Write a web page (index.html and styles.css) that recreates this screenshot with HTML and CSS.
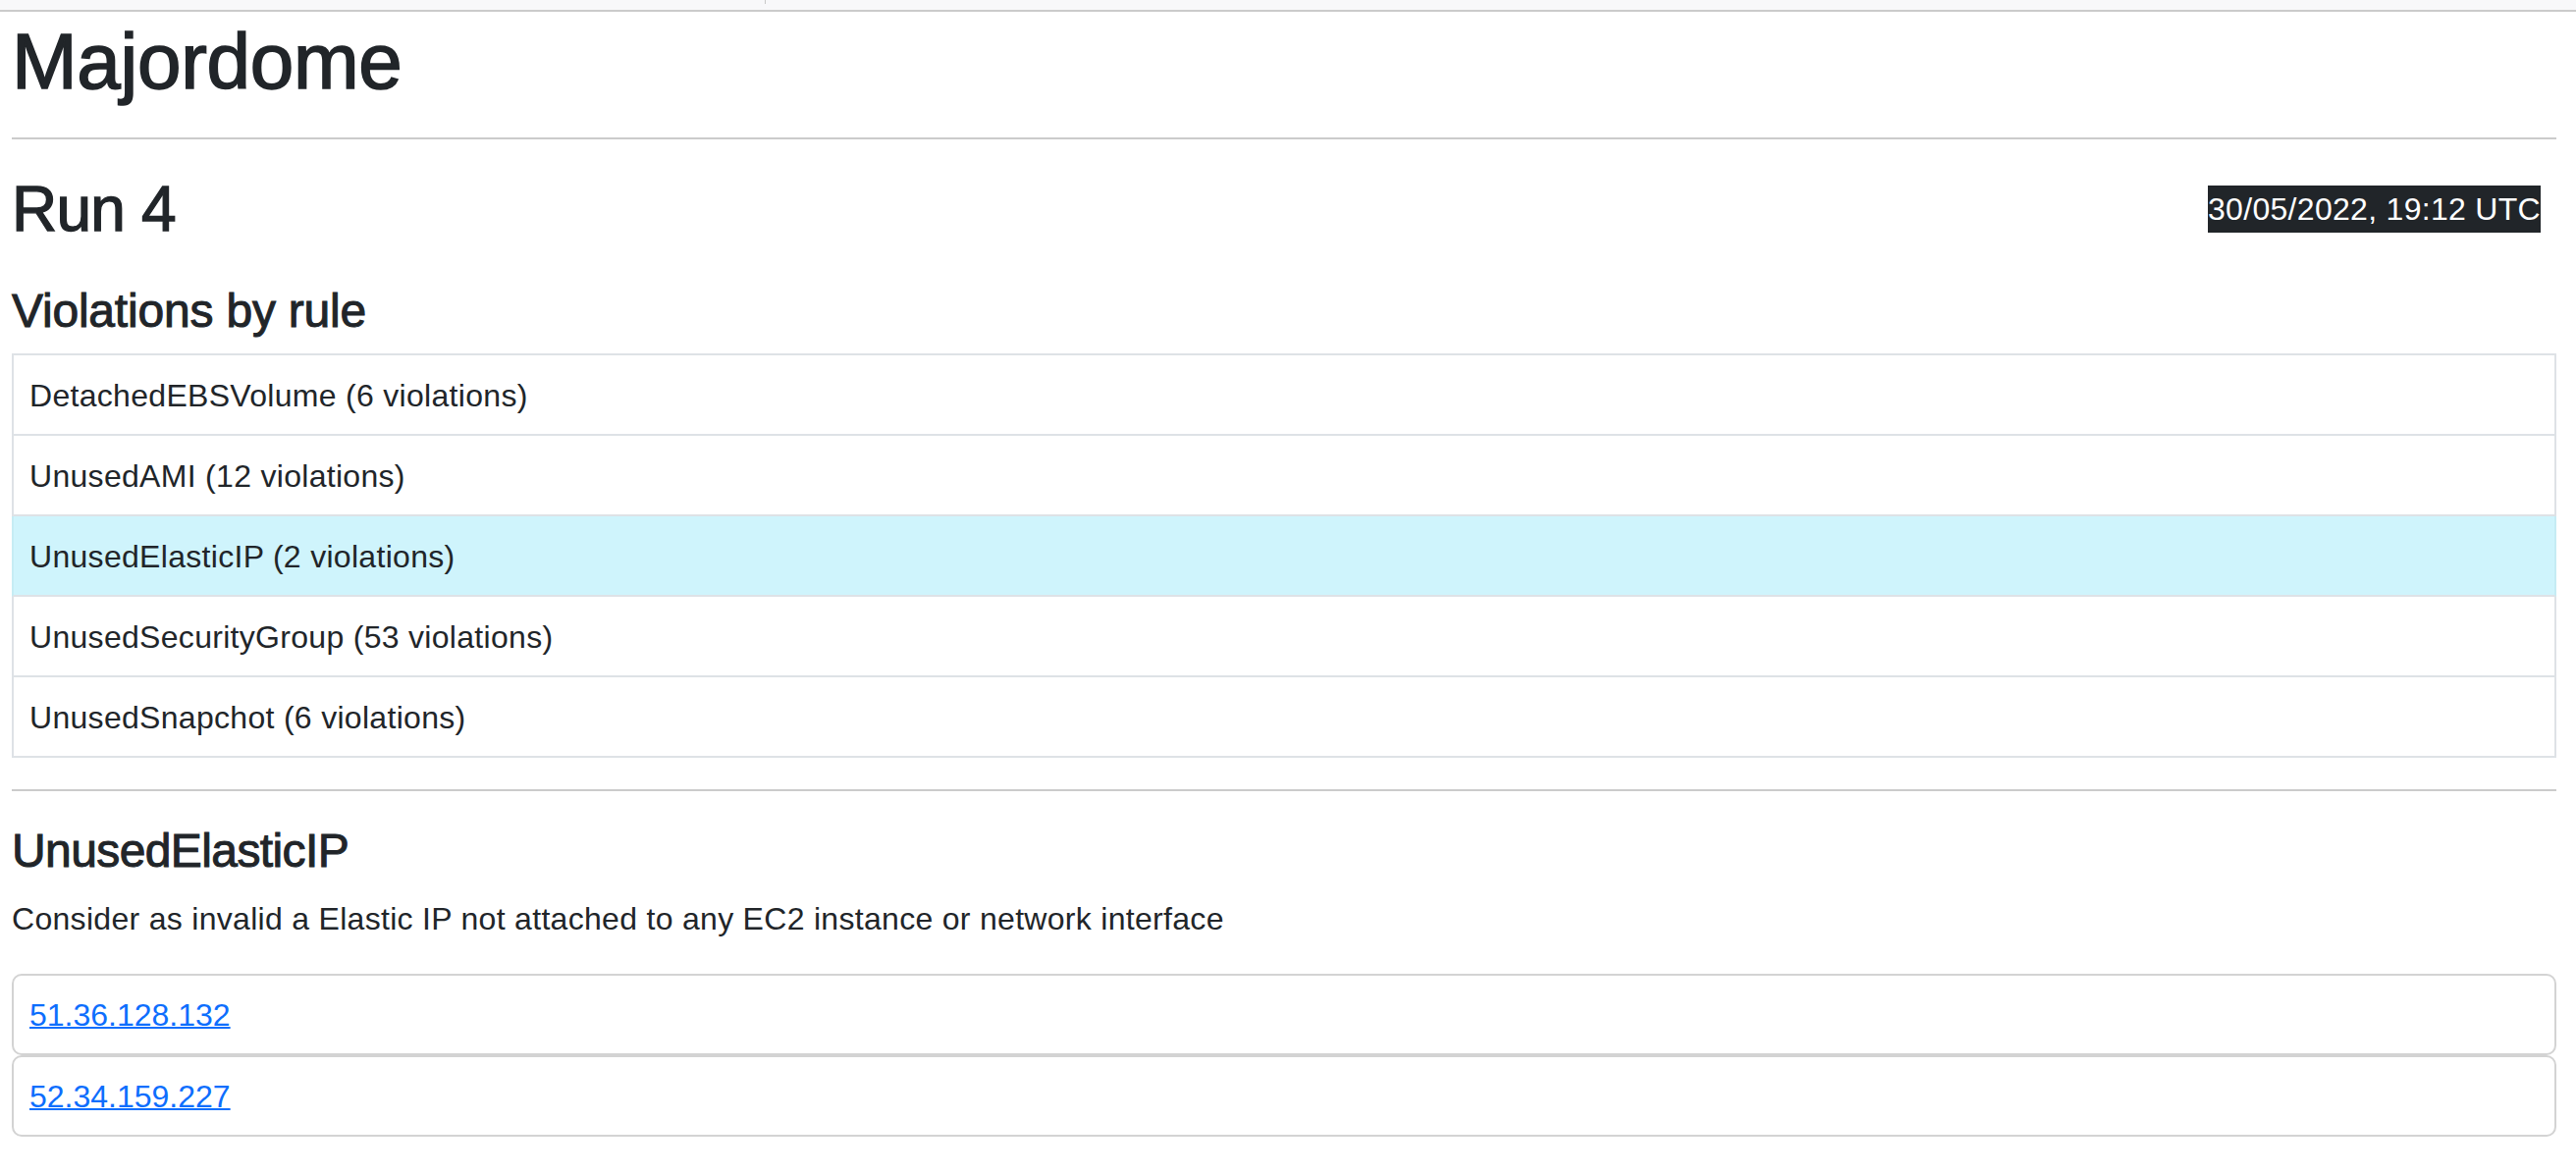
FILE: index.html
```html
<!DOCTYPE html>
<html lang="en">
<head>
<meta charset="utf-8">
<title>Majordome</title>
<link rel="stylesheet" href="styles.css">
</head>
<body>
<div class="topbar"><div class="tab"></div></div>
<div class="container">
  <h1 class="title">Majordome</h1>
  <hr class="rule rule-top">
  <div class="run-header">
    <h2 class="run-title">Run 4</h2>
    <span class="run-date">30/05/2022, 19:12 UTC</span>
  </div>
  <h4 class="section-title">Violations by rule</h4>
  <ul class="rule-list">
    <li class="rule-item">DetachedEBSVolume (6 violations)</li>
    <li class="rule-item">UnusedAMI (12 violations)</li>
    <li class="rule-item rule-item-info">UnusedElasticIP (2 violations)</li>
    <li class="rule-item">UnusedSecurityGroup (53 violations)</li>
    <li class="rule-item">UnusedSnapchot (6 violations)</li>
  </ul>
  <hr class="rule rule-mid">
  <h4 class="detail-title">UnusedElasticIP</h4>
  <p class="detail-desc">Consider as invalid a Elastic IP not attached to any EC2 instance or network interface</p>
  <div class="resource-list">
    <div class="resource-card"><a class="resource-link" href="#">51.36.128.132</a></div>
    <div class="resource-card"><a class="resource-link" href="#">52.34.159.227</a></div>
  </div>
</div>
</body>
</html>
```
FILE: styles.css
```css
html, body {
  margin: 0;
  padding: 0;
  background: #ffffff;
}

body {
  font-family: "Liberation Sans", Arial, Helvetica, sans-serif;
  font-size: 32px;
  line-height: 48px;
  color: #212529;
  letter-spacing: 0.3px;
}

.topbar {
  height: 10px;
  background: #f8f8fa;
  border-bottom: 2px solid #cbcbcb;
}

.tab {
  width: 779px;
  height: 4px;
  border-right: 1px solid #c8c8c8;
}

.container {
  padding: 0 20px 0 12px;
}

.title {
  font-size: 80px;
  line-height: 96px;
  font-weight: 500;
  letter-spacing: -0.3px;
  -webkit-text-stroke: 1.6px #212529;
  margin: 3px 0 29px 0;
}

.rule {
  border: 0;
  border-top: 2px solid #cbcbcb;
  height: 0;
  margin: 0;
}

.rule-top {
  margin-bottom: 33px;
}

.run-header {
  display: flex;
  align-items: center;
  justify-content: space-between;
  padding-right: 16px;
}

.run-title {
  font-size: 64px;
  line-height: 76.8px;
  font-weight: 500;
  letter-spacing: -0.8px;
  -webkit-text-stroke: 1.3px #212529;
  margin: 0;
}

.run-date {
  background: #212529;
  color: #ffffff;
  font-size: 32px;
  line-height: 48px;
}

.section-title {
  font-size: 48px;
  line-height: 57.6px;
  font-weight: 500;
  letter-spacing: -0.2px;
  -webkit-text-stroke: 1px #212529;
  margin: 36px 0 15px 0;
}

.rule-list {
  list-style: none;
  margin: 0 0 32px 0;
  padding: 0;
}

.rule-item {
  border: 2px solid #dee2e6;
  padding: 17px 16px 15px 16px;
  background: #ffffff;
}

.rule-item + .rule-item {
  border-top-width: 0;
}

.rule-item-info {
  background: #cff4fc;
  border-left-color: #c6ecf4;
  border-right-color: #c6ecf4;
}

.rule-mid {
  margin-bottom: 32px;
}

.detail-title {
  font-size: 48px;
  line-height: 57.6px;
  font-weight: 500;
  letter-spacing: -0.6px;
  -webkit-text-stroke: 1px #212529;
  margin: 0 0 16px 0;
}

.detail-desc {
  margin: 0 0 32px 0;
}

.resource-list {
  display: flex;
  flex-direction: column;
}

.resource-card {
  border: 2px solid #d3d3d3;
  border-radius: 10px;
  padding: 16px 16px 15px 16px;
}

.resource-link {
  color: #0d6efd;
  letter-spacing: 0;
  text-decoration: underline;
  text-decoration-thickness: 2px;
}
```
